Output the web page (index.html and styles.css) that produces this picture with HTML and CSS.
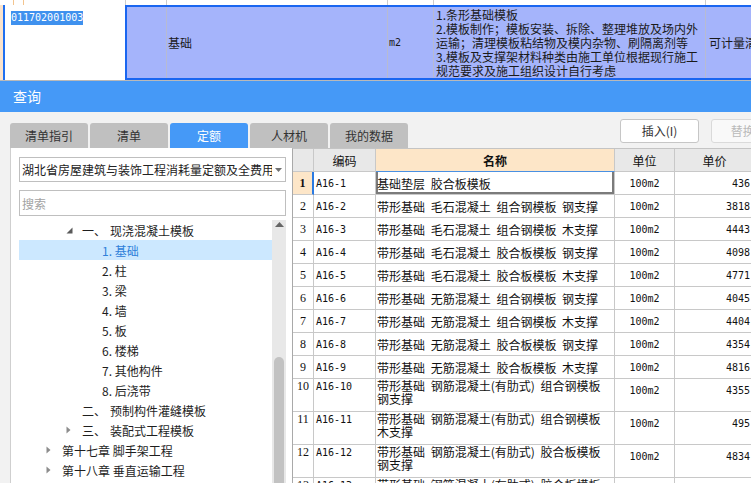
FILE: index.html
```html
<!DOCTYPE html>
<html lang="zh-CN">
<head>
<meta charset="utf-8">
<title>查询</title>
<link rel="stylesheet" href="styles.css">
</head>
<body>
<div class="page">
  <div class="sheet">
    <div class="strip">
      <span class="s1 o"></span><span class="s2 o"></span><span class="s3"></span><span class="s4"></span><span class="s5"></span><span class="s6"></span><span class="s7"></span>
    </div>
    <div class="srow">
      <div class="codecell"><span class="hl">011702001003</span></div>
      <div class="sel">
        <div class="c c1"></div>
        <div class="c c2">基础</div>
        <div class="c c3 mono">m2</div>
        <div class="c c4">
          <div>1.条形基础模板</div>
          <div>2.模板制作；模板安装、拆除、整理堆放及场内外运输；清理模板粘结物及模内杂物、刷隔离剂等</div>
          <div>3.模板及支撑架材料种类由施工单位根据现行施工规范要求及施工组织设计自行考虑</div>
        </div>
        <div class="c c5">可计量清单</div>
      </div>
    </div>
  </div>

  <div class="dialog">
    <div class="titlebar">查询</div>
    <div class="dbody">
      <div class="topbar">
        <div class="tabs">
          <div class="tab">清单指引</div>
          <div class="tab">清单</div>
          <div class="tab on">定额</div>
          <div class="tab">人材机</div>
          <div class="tab">我的数据</div>
        </div>
        <div class="tools">
          <button class="btn">插入(I)</button>
          <button class="btn off">替换(R)</button>
        </div>
      </div>

      <div class="main">
        <div class="left">
          <div class="select">
            <div class="select-text">湖北省房屋建筑与装饰工程消耗量定额及全费用基价表(2018)</div>
            <div class="select-arrow"><svg width="7" height="4" viewBox="0 0 7 4"><path d="M0 0H7L3.5 4Z" fill="#707070"/></svg></div>
          </div>
          <input class="search" type="text" placeholder="搜索">
          <div class="treebox">
            <div class="tree">
              <div class="node l1"><span class="tw"><svg width="7" height="7" viewBox="0 0 7 7"><path d="M6.5 0.5V6.5H0.5Z" fill="#5a5a5a"/></svg></span><span class="num">一、</span>现浇混凝土模板</div>
              <div class="node l2 cur"><span class="tw"></span>1. 基础</div>
              <div class="node l2"><span class="tw"></span>2. 柱</div>
              <div class="node l2"><span class="tw"></span>3. 梁</div>
              <div class="node l2"><span class="tw"></span>4. 墙</div>
              <div class="node l2"><span class="tw"></span>5. 板</div>
              <div class="node l2"><span class="tw"></span>6. 楼梯</div>
              <div class="node l2"><span class="tw"></span>7. 其他构件</div>
              <div class="node l2"><span class="tw"></span>8. 后浇带</div>
              <div class="node l1"><span class="tw"></span><span class="num">二、</span>预制构件灌缝模板</div>
              <div class="node l1"><span class="tw"><svg width="5" height="8" viewBox="0 0 5 8"><path d="M0.5 0.5L4.5 4L0.5 7.5Z" fill="#8c8c8c"/></svg></span><span class="num">三、</span>装配式工程模板</div>
              <div class="node l0"><span class="tw"><svg width="5" height="8" viewBox="0 0 5 8"><path d="M0.5 0.5L4.5 4L0.5 7.5Z" fill="#8c8c8c"/></svg></span>第十七章 脚手架工程</div>
              <div class="node l0"><span class="tw"><svg width="5" height="8" viewBox="0 0 5 8"><path d="M0.5 0.5L4.5 4L0.5 7.5Z" fill="#8c8c8c"/></svg></span>第十八章 垂直运输工程</div>
            </div>
            <div class="vscroll">
              <div class="up"><svg width="9" height="5" viewBox="0 0 9 5"><path d="M0 5L4.5 0L9 5Z" fill="#666"/></svg></div>
              <div class="thumb"></div>
            </div>
          </div>
        </div>

        <div class="tablewrap">
          <div class="tr head">
            <div class="td rn"></div>
            <div class="td cd">编码</div>
            <div class="td nm">名称</div>
            <div class="td un">单位</div>
            <div class="td pr">单价</div>
          </div>
          <div class="tr first">
            <div class="td rn">1</div>
            <div class="td cd">A16-1</div>
            <div class="td nm">基础垫层 胶合板模板</div>
            <div class="td un">100m2</div>
            <div class="td pr">436</div>
          </div>
          <div class="tr">
            <div class="td rn">2</div>
            <div class="td cd">A16-2</div>
            <div class="td nm">带形基础 毛石混凝土 组合钢模板 钢支撑</div>
            <div class="td un">100m2</div>
            <div class="td pr">3818</div>
          </div>
          <div class="tr">
            <div class="td rn">3</div>
            <div class="td cd">A16-3</div>
            <div class="td nm">带形基础 毛石混凝土 组合钢模板 木支撑</div>
            <div class="td un">100m2</div>
            <div class="td pr">4443</div>
          </div>
          <div class="tr">
            <div class="td rn">4</div>
            <div class="td cd">A16-4</div>
            <div class="td nm">带形基础 毛石混凝土 胶合板模板 钢支撑</div>
            <div class="td un">100m2</div>
            <div class="td pr">4098</div>
          </div>
          <div class="tr">
            <div class="td rn">5</div>
            <div class="td cd">A16-5</div>
            <div class="td nm">带形基础 毛石混凝土 胶合板模板 木支撑</div>
            <div class="td un">100m2</div>
            <div class="td pr">4771</div>
          </div>
          <div class="tr">
            <div class="td rn">6</div>
            <div class="td cd">A16-6</div>
            <div class="td nm">带形基础 无筋混凝土 组合钢模板 钢支撑</div>
            <div class="td un">100m2</div>
            <div class="td pr">4045</div>
          </div>
          <div class="tr">
            <div class="td rn">7</div>
            <div class="td cd">A16-7</div>
            <div class="td nm">带形基础 无筋混凝土 组合钢模板 木支撑</div>
            <div class="td un">100m2</div>
            <div class="td pr">4404</div>
          </div>
          <div class="tr">
            <div class="td rn">8</div>
            <div class="td cd">A16-8</div>
            <div class="td nm">带形基础 无筋混凝土 胶合板模板 钢支撑</div>
            <div class="td un">100m2</div>
            <div class="td pr">4354</div>
          </div>
          <div class="tr">
            <div class="td rn">9</div>
            <div class="td cd">A16-9</div>
            <div class="td nm">带形基础 无筋混凝土 胶合板模板 木支撑</div>
            <div class="td un">100m2</div>
            <div class="td pr">4816</div>
          </div>
          <div class="tr tall">
            <div class="td rn">10</div>
            <div class="td cd">A16-10</div>
            <div class="td nm">带形基础 钢筋混凝土(有肋式) 组合钢模板 钢支撑</div>
            <div class="td un">100m2</div>
            <div class="td pr">4355</div>
          </div>
          <div class="tr tall">
            <div class="td rn">11</div>
            <div class="td cd">A16-11</div>
            <div class="td nm">带形基础 钢筋混凝土(有肋式) 组合钢模板 木支撑</div>
            <div class="td un">100m2</div>
            <div class="td pr">495</div>
          </div>
          <div class="tr tall">
            <div class="td rn">12</div>
            <div class="td cd">A16-12</div>
            <div class="td nm">带形基础 钢筋混凝土(有肋式) 胶合板模板 钢支撑</div>
            <div class="td un">100m2</div>
            <div class="td pr">4834</div>
          </div>
          <div class="tr tall">
            <div class="td rn">13</div>
            <div class="td cd">A16-13</div>
            <div class="td nm">带形基础 钢筋混凝土(有肋式) 胶合板模板 木支撑</div>
            <div class="td un">100m2</div>
            <div class="td pr"></div>
          </div>
        </div>
      </div>
    </div>
  </div>
</div>
</body>
</html>
```

FILE: styles.css
```css
* { box-sizing: border-box; }
html, body {
  margin: 0;
  padding: 0;
  width: 751px;
  height: 483px;
  overflow: hidden;
}
body {
  font-family: "Noto Sans CJK SC", "Microsoft YaHei", sans-serif;
  font-size: 12px;
  color: #1e1e1e;
  background: #fff;
}
.mono { font-family: "DejaVu Sans Mono", monospace; font-size: 10px; }

.page {
  width: 800px;
  height: 483px;
  display: flex;
  flex-direction: column;
}

/* ---------- spreadsheet row above ---------- */
.sheet {
  flex: none;
  background: #fff;
  border-bottom: 1px solid #b9b9b9;
}
.strip { display: flex; height: 5px; }
.strip span { flex: none; height: 5px; border-right: 1px solid #cdcdcd; }
.strip .o { border-right-color: #f3c48e; }
.s1 { width: 14px; }
.s2 { width: 10px; }
.s3 { width: 102px; }
.s4 { width: 41px; }
.s5 { width: 221px; }
.s6 { width: 46px; }
.s7 { width: 272px; }

.srow {
  display: flex;
  height: 75px;
  background: linear-gradient(to right, #fbe3cc 3px, #fff 3px);
}
.codecell {
  flex: none;
  width: 122px;
  margin-left: 3px;
  border-left: 2px solid #1f6ff0;
  padding: 2px 0 0 6px;
  background: #fff;
}
.hl {
  font-family: "DejaVu Sans Mono", monospace;
  font-size: 10px;
  line-height: 14px;
  display: inline-block;
  background: #3f91ee;
  color: #fff;
}
.sel {
  flex: 1;
  display: flex;
  background: #a5b4fb;
  border: 2px solid #1a66f0;
  border-right: none;
}
.c {
  flex: none;
  display: flex;
  flex-direction: column;
  justify-content: center;
  border-right: 1px solid #b7bbd2;
  color: #1a1a1a;
}
.c1 { width: 40px; }
.c2 { width: 221px; padding-left: 1px; }
.c3 { width: 46px; padding-left: 1px; }
.c4 { width: 272px; padding-left: 2px; line-height: 14px; }
.c5 { flex: 1; border-right: none; padding-left: 3px; white-space: nowrap; }

/* ---------- dialog ---------- */
.dialog {
  flex: 1;
  min-height: 0;
  display: flex;
  flex-direction: column;
}
.titlebar {
  flex: none;
  height: 31px;
  line-height: 31px;
  padding-left: 13px;
  background: #4599f7;
  color: #fff;
  font-size: 14px;
}
.dbody {
  flex: 1;
  min-height: 0;
  display: flex;
  flex-direction: column;
  background: #f2f2f2;
  padding: 0 10px;
}
.topbar {
  flex: none;
  height: 36px;
  display: flex;
}
.tabs {
  display: flex;
  gap: 2px;
  align-self: flex-end;
}
.tab {
  width: 78px;
  height: 25px;
  line-height: 25px;
  text-align: center;
  background: #c0c0c0;
  color: #333;
  border-radius: 3px 3px 0 0;
}
.tab.on { background: #4599f7; color: #fff; }
.tools {
  margin-left: auto;
  display: flex;
  gap: 12px;
  padding-top: 7px;
}
.btn {
  width: 79px;
  height: 24px;
  padding: 0;
  border: 1px solid #c6c6c6;
  border-radius: 3px;
  background: #fff;
  font: inherit;
  color: #333;
  line-height: 22px;
  text-align: center;
}
.btn.off { color: #b9b9b9; border-color: #dadada; background: #f9f9f9; }

.main {
  flex: 1;
  min-height: 0;
  display: flex;
}

/* left panel */
.left {
  flex: none;
  width: 282px;
  background: #fff;
  border-left: 1px solid #cfcfcf;
  padding: 9px 6px 0 8px;
  display: flex;
  flex-direction: column;
}
.select {
  flex: none;
  height: 25px;
  border: 1px solid #bfbfbf;
  display: flex;
  align-items: center;
  padding-left: 2px;
}
.select-text {
  flex: 1;
  overflow: hidden;
  white-space: nowrap;
  color: #222;
}
.select-arrow {
  flex: none;
  width: 13px;
  display: flex;
  justify-content: center;
  align-items: center;
}
.search {
  flex: none;
  display: block;
  width: 100%;
  height: 26px;
  margin: 8px 0 0;
  border: 1px solid #bfbfbf;
  padding: 0 2px;
  font: inherit;
  color: #333;
  outline: none;
  background: #fff;
}
.search::placeholder { color: #a3a3a3; }
.treebox {
  margin-top: 4px;
  flex: 1;
  min-height: 0;
  display: flex;
}
.tree { flex: 1; min-width: 0; }
.node {
  height: 20px;
  display: flex;
  align-items: center;
  white-space: nowrap;
  color: #1e1e1e;
}
.node.l0 { padding-left: 27px; }
.node.l1 { padding-left: 47px; }
.node.l2 { padding-left: 67px; }
.node.cur { background: #cce8ff; color: #2f80da; }
.tw {
  flex: none;
  width: 16px;
  display: flex;
  align-items: center;
}
.num { display: inline-block; width: 28px; }
.vscroll {
  flex: none;
  width: 14px;
  background: #e8e8e8;
  display: flex;
  flex-direction: column;
  align-items: center;
}
.up {
  flex: none;
  height: 14px;
  padding-top: 2px;
  display: flex;
  justify-content: center;
}
.thumb {
  flex: 1;
  width: 10px;
  margin-top: 123px;
  background: #c2c2c2;
  border-radius: 5px 5px 0 0;
}

/* grid */
.tablewrap {
  flex: 1;
  min-width: 0;
  overflow: hidden;
  border-left: 1px solid #a9a9a9;
  border-top: 1px solid #c4c4c4;
  background: #fff;
}
.tr { display: flex; height: 23px; }
.tr.tall { height: 33px; }
.td {
  flex: none;
  border-right: 1px solid #c8c8c8;
  border-bottom: 1px solid #c8c8c8;
  padding-top: 5px;
  line-height: 13px;
  white-space: nowrap;
  overflow: hidden;
  background: #fff;
  color: #111;
}
.rn { width: 21px; text-align: center; font-family: "Liberation Serif", serif; font-size: 12px; }
.cd { width: 62px; padding-left: 2px; font-family: "DejaVu Sans Mono", monospace; font-size: 10px; }
.nm { width: 239px; padding-left: 1px; word-spacing: 3px; }
.un { width: 60px; text-align: center; font-family: "DejaVu Sans Mono", monospace; font-size: 10px; }
.pr { width: 80px; text-align: right; padding-right: 4px; font-family: "DejaVu Sans Mono", monospace; font-size: 10px; }

.head .td {
  background: #e8e8e8;
  text-align: center;
  padding-left: 0;
  font-family: "Noto Sans CJK SC", sans-serif;
  font-size: 12px;
  padding-right: 0;
}
.head .nm {
  background: #fde6c8;
  font-weight: bold;
  border-bottom-color: #4a90e2;
}
.first .rn {
  background: #fde6c8;
  font-weight: bold;
  border-right: 2px solid #2a7ae2;
}
.first .nm {
  box-shadow: inset 2px 0 #7b7b7b, inset -2px 0 #7b7b7b, inset 0 -2px #7b7b7b;
}
.tall .nm { white-space: normal; padding-top: 0; }
.tall .rn, .tall .cd { padding-top: 1px; }
```
